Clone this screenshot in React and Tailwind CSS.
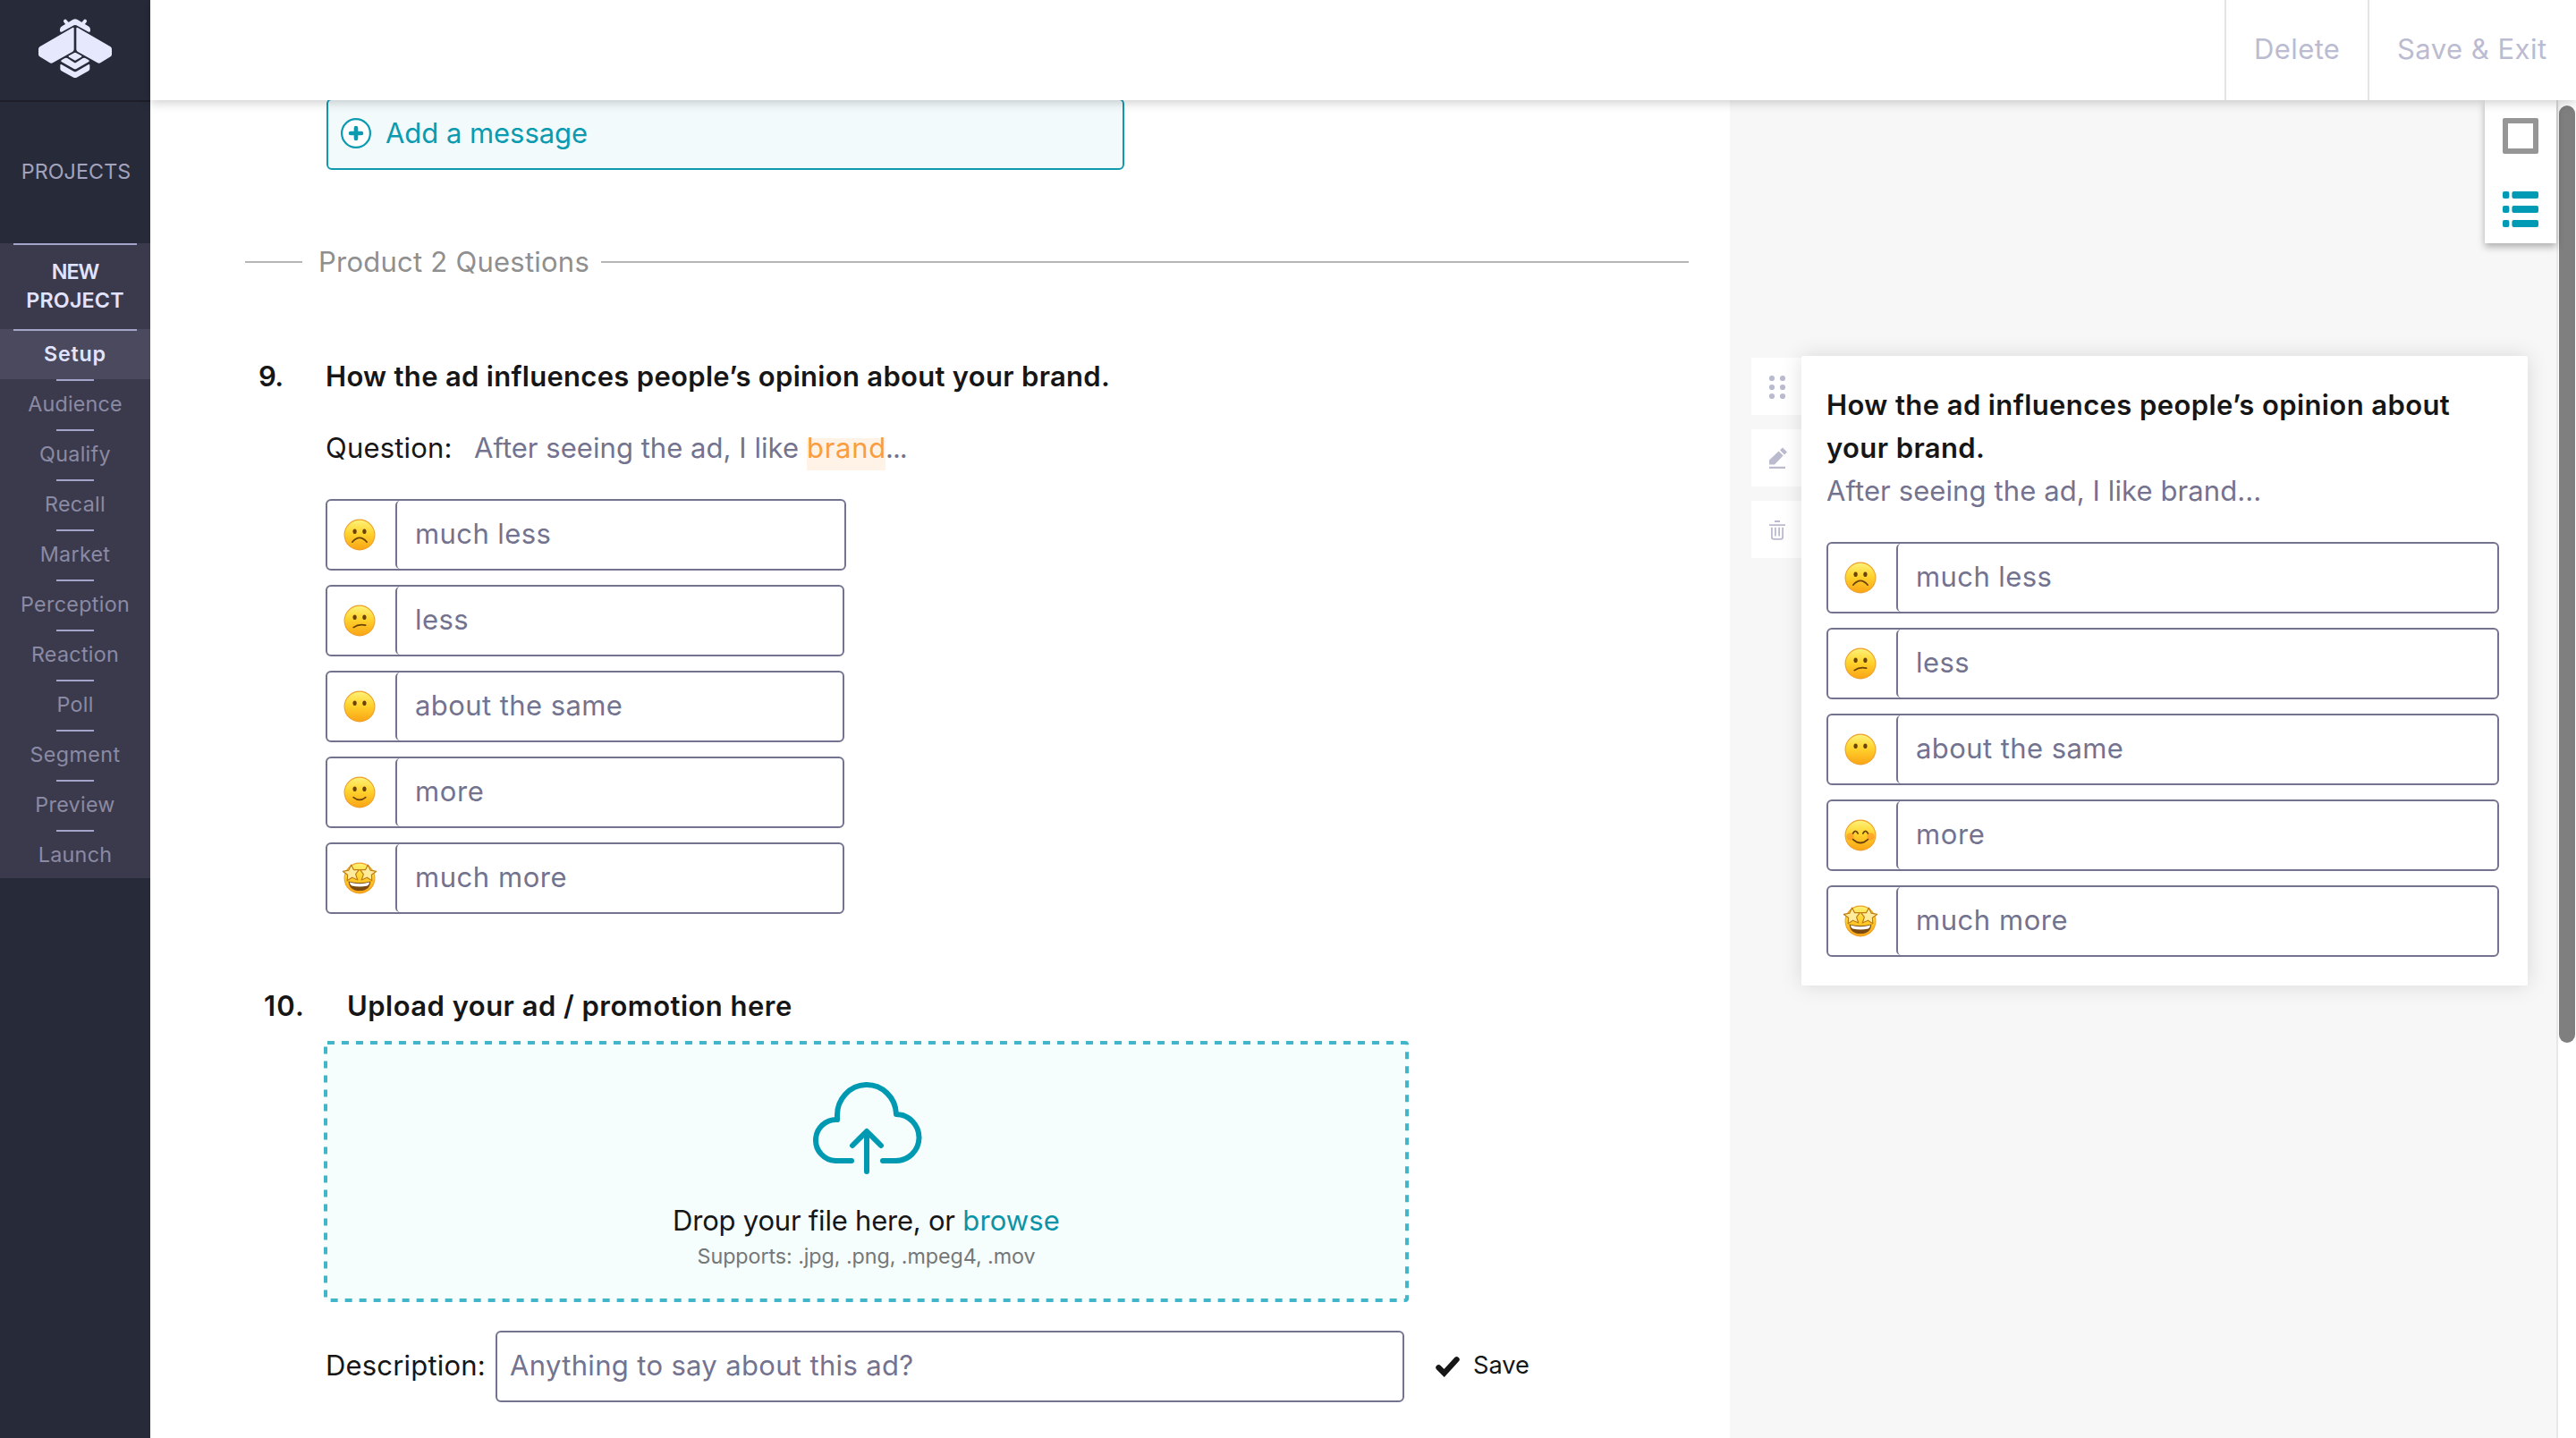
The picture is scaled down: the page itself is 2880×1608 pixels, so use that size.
import React from "react";

function Logo() {
  const wing =
    "M248 95Q248 90 243 93L133 157Q129 160 129 165V182Q129 187 133 190L166 210Q172 214 178 210L244 173Q248 170 248 166Z";
  return (
    <svg className="h-[68px] w-[84px]" viewBox="126 60 252 204" fill="#e6e8fd">
      <path d="M219 71L228 82M285 71L276 82" stroke="#e6e8fd" strokeWidth="12" strokeLinecap="round" />
      <path d="M201 103V98Q202 91 208 88L244 66Q252 62 260 66L296 88Q302 91 303 98V103Q303 109 297 107L256 85Q252 83 248 85L207 107Q201 109 201 103Z" />
      <path d={wing} />
      <path d={wing} transform="translate(504 0) scale(-1 1)" />
      <path d="M248 178Q252 175 256 178L273 187Q276 189 273 191L256 201Q252 204 248 201L231 191Q228 189 231 187Z" />
      <path d="M206 202L218 195Q222 193 226 195L248 209Q252 212 256 209L278 195Q282 193 286 195L298 202Q301 205 298 207L256 231Q252 233 248 231L206 207Q203 205 206 202Z" />
      <path d="M202 219Q202 214 207 217L248 240Q252 242 256 240L296 217Q301 214 301 219V231Q301 235 297 238L257 260Q252 262 247 260L206 238Q202 235 202 231Z" />
    </svg>
  );
}

function Face({ mood }) {
  const id = React.useId();
  const ink = "#6b4208";
  const line = { fill: "none", stroke: ink, strokeWidth: 1.7, strokeLinecap: "round" };
  return (
    <svg className="h-[38px] w-[40px]" viewBox="0 0 40 38">
      <defs>
        <linearGradient id={id} x1="0" y1="0" x2="0" y2="1">
          <stop offset="0" stopColor="#fff27a" />
          <stop offset="0.45" stopColor="#ffd42e" />
          <stop offset="1" stopColor="#fba414" />
        </linearGradient>
      </defs>
      <circle cx="20" cy="19" r="16.9" fill={`url(#${id})`} stroke="#efa02a" strokeWidth="1.1" />
      {mood !== "blush" && mood !== "starry" && (
        <g fill={ink}>
          <ellipse cx="14.6" cy="15.2" rx="2.1" ry="2.8" />
          <ellipse cx="25.4" cy="15.2" rx="2.1" ry="2.8" />
        </g>
      )}
      {mood === "frown" && <path d="M11.8 27.2Q20 17.6 28.2 27.2" {...line} />}
      {mood === "confused" && <path d="M13.2 26.6Q19 22.4 26.6 24.2" {...line} />}
      {mood === "smile" && <path d="M13.2 24.6Q20 30.2 26.8 24.6" {...line} />}
      {mood === "blush" && (
        <g>
          <circle cx="8.6" cy="20.5" r="4.2" fill="#ff7a2a" opacity="0.45" />
          <circle cx="31.4" cy="20.5" r="4.2" fill="#ff7a2a" opacity="0.45" />
          <path d="M11.6 17Q14.4 11.6 17.2 17M22.8 17Q25.6 11.6 28.4 17M11.6 23.6Q20 31.4 28.4 23.6" {...line} />
        </g>
      )}
      {mood === "starry" && (
        <g>
          <path d="M7.6 22.4Q20 26 32.4 22.4Q31.4 33 20 33Q8.6 33 7.6 22.4Z" fill="#7a4a10" />
          <path d="M8.8 23.6Q20 26.8 31.2 23.6Q30.6 27 28.8 27.6Q20 29.4 11.2 27.6Q9.4 27 8.8 23.6Z" fill="#fff" />
          <path
            d="M10.6 4L13.4 9.6L19.4 9.6L15.6 14.6L17.8 21L11.6 18.2L6.2 21.8L6.6 15.2L1.4 11.4L7.8 10.2Z"
            fill="#ffeb9c" stroke="#c07c10" strokeWidth="1.2" strokeLinejoin="round"
          />
          <path
            d="M29.4 4L26.6 9.6L20.6 9.6L24.4 14.6L22.2 21L28.4 18.2L33.8 21.8L33.4 15.2L38.6 11.4L32.2 10.2Z"
            fill="#ffeb9c" stroke="#c07c10" strokeWidth="1.2" strokeLinejoin="round"
          />
        </g>
      )}
    </svg>
  );
}

function Option({ mood, label, className }) {
  return (
    <div className={`flex h-20 rounded-[6px] border-2 border-[#73738f] bg-white ${className}`}>
      <div className="flex w-[76px] items-center justify-center pr-1 pb-px">
        <Face mood={mood} />
      </div>
      <div className="flex flex-1 items-center rounded-l-[5px] border-l-2 border-[#73738f] pb-[2px] pl-[20px] text-[#73738f]">
        {label}
      </div>
    </div>
  );
}

const steps = [
  ["Audience", "tracking-[0.16px]"],
  ["Qualify", "tracking-[0.3px]"],
  ["Recall", "tracking-[0.3px]"],
  ["Market", "tracking-[0.3px]"],
  ["Perception", "tracking-[0.32px]"],
  ["Reaction", "tracking-[0.3px]"],
  ["Poll", "tracking-[0.3px]"],
  ["Segment", "tracking-[0.4px]"],
  ["Preview", "tracking-[0.3px]"],
  ["Launch", "tracking-[0.3px]"],
];

function Sidebar() {
  return (
    <aside className="flex w-[168px] shrink-0 flex-col bg-[#272a39] text-center text-[23.3px]">
      <div className="flex h-[114px] flex-col items-center border-b-2 border-[#1d1e29] pt-5">
        <Logo />
      </div>
      <div className="h-[158px] pt-[62px] pl-[2px] leading-[32px] tracking-[0.07px] text-[#a2a3bb]">PROJECTS</div>
      <div className="h-[710px] bg-[#3b3a4c]">
        <div className="flex h-24 flex-col items-center">
          <div className="h-[2px] w-[138px] bg-[#a5a5ca]" />
          <div className="pt-[14px] leading-[32px] font-semibold text-[#e2e4ff]">
            <div className="tracking-[-1px]">NEW</div>
            <div className="tracking-[0.18px]">PROJECT</div>
          </div>
        </div>
        <div className="flex h-14 flex-col items-center bg-[#4a495d]">
          <div className="h-[2px] w-[138px] bg-[#a5a5ca]" />
          <div className="leading-[51px] font-semibold tracking-[0.77px] text-[#e2e4ff]">Setup</div>
        </div>
        {steps.map(([name, track]) => (
          <div key={name} className="flex h-14 flex-col items-center text-[#8a8aa4]">
            <div className="h-[2px] w-[42px] bg-[#a5a5ca]" />
            <div className={`leading-[51px] ${track}`}>{name}</div>
          </div>
        ))}
      </div>
    </aside>
  );
}

function Header() {
  return (
    <header className="relative z-10 flex h-28 shrink-0 justify-end bg-white leading-[109px] text-[#bbbbd1] shadow-[0_2px_12px_rgba(0,0,0,0.22)]">
      <div className="w-[160px] border-l-2 border-[#e3e3e6] pl-[31px] tracking-[0.4px]">Delete</div>
      <div className="w-[233px] border-l-2 border-[#e3e3e6] pl-[31px] tracking-[0.48px]">Save &amp; Exit</div>
    </header>
  );
}

function Survey() {
  return (
    <main className="w-[1766px] shrink-0 bg-white leading-[40px] text-[#161616]">
      <div className="-mt-[2px] ml-[197px] flex h-20 w-[892px] items-center gap-[15px] rounded-[6px] border-2 border-[#1199ae] bg-[#f2fafb] pb-[2px] pl-[13px] text-[#0b9ab0]">
        <svg className="h-9 w-9" viewBox="0 0 36 36">
          <circle cx="18" cy="18" r="15.9" fill="#fff" stroke="#0b9ab0" strokeWidth="2.2" />
          <path d="M18 12V24M12 18H24" stroke="#0b9ab0" strokeWidth="4.6" strokeLinecap="round" />
        </svg>
        <span className="tracking-[-0.04px]">Add a message</span>
      </div>

      <div className="mt-[83px] mr-[46px] ml-[106px] flex items-center text-[#8f8f8f]">
        <div className="h-[2px] w-16 bg-[#b6b6b6]" />
        <div className="w-[334px] pl-[18px] whitespace-nowrap tracking-[0.24px]">Product 2 Questions</div>
        <div className="h-[2px] flex-1 bg-[#b6b6b6]" />
      </div>

      <div className="mt-[88px] ml-[121px] flex font-semibold">
        <div className="w-[75px] tracking-[-0.6px]">9.</div>
        <div className="whitespace-nowrap tracking-[0.3px]">How the ad influences people’s opinion about your brand.</div>
      </div>

      <div className="mt-[40px] ml-[196px] flex h-[40px] whitespace-nowrap text-[#73738f]">
        <div className="w-[166px] tracking-[0.2px] text-[#161616]">Question:</div>
        <div className="w-[372px] tracking-[0.04px]">After seeing the ad, I like</div>
        <div className="mt-[9px] h-9 w-[88px] bg-[#fff3e8] leading-[22px] tracking-[0.7px] text-[#f99d40]">brand</div>
        <div className="tracking-[-1px]">...</div>
      </div>

      <div className="mt-[37px] ml-[196px] flex flex-col gap-4">
        <Option mood="frown" className="w-[582px]" label={<span className="tracking-[0.4px]">much less</span>} />
        <Option mood="confused" className="w-[580px]" label={<span className="tracking-[0.45px]">less</span>} />
        <Option mood="neutral" className="w-[580px]" label={<span className="tracking-[0.42px]">about the same</span>} />
        <Option mood="smile" className="w-[580px]" label={<span className="tracking-[0.6px]">more</span>} />
        <Option mood="starry" className="w-[580px]" label={<span className="tracking-[0.55px]">much more</span>} />
      </div>

      <div className="mt-[82px] ml-[127px] flex pt-px font-semibold">
        <div className="w-[93px] tracking-[1.2px]">10.</div>
        <div className="whitespace-nowrap tracking-[0.47px]">Upload your ad / promotion here</div>
      </div>

      <div className="relative mt-[19px] ml-[194px] flex h-[292px] w-[1213px] flex-col items-center rounded-[4px] bg-[#f5fdfd] pt-11">
        <svg className="absolute inset-0 h-[292px] w-[1213px]" viewBox="0 0 1213 292" fill="none">
          <rect x="2" y="2" width="1209" height="288" rx="2" stroke="#43b5c8" strokeWidth="4" strokeDasharray="8 8" />
        </svg>
        <svg
          className="h-[108px] w-[128px] shrink-0"
          viewBox="906 1208 128 108"
          fill="none"
          stroke="#0099b2"
          strokeWidth="6"
          strokeLinecap="round"
          strokeLinejoin="round"
        >
          <path d="M953 1298H935A23 23 0 0 1 937 1252V1248A33 34 0 0 1 1003 1246A26 26 0 0 1 1002 1298H988" />
          <path d="M970 1310V1266M954 1281L970 1265L986 1281" />
        </svg>
        <div className="mt-[29px] whitespace-nowrap tracking-[-0.22px]">
          Drop your file here, or <span className="tracking-[0.1px] text-[#0b93a8]">browse</span>
        </div>
        <div className="mt-[4px] text-[23.3px] leading-[32px] tracking-[-0.07px] text-[#747878]">
          Supports: .jpg, .png, .mpeg4, .mov
        </div>
      </div>

      <div className="mt-8 ml-[196px] flex h-20 items-center">
        <div className="w-[190px] pb-[2px] tracking-[0.18px]">Description:</div>
        <div className="flex h-20 w-[1016px] items-center rounded-[6px] border-2 border-[#73738f] pb-[2px] pl-[14px] tracking-[0.34px] text-[#73738f]">
          Anything to say about this ad?
        </div>
        <svg className="ml-[34px] h-[24px] w-[30px]" viewBox="0 0 30 24">
          <path d="M4.4 13.2L10.6 19.4L24.6 4.2" fill="none" stroke="#161616" strokeWidth="6.2" strokeLinecap="round" />
        </svg>
        <div className="ml-[13px] pb-[2px] text-[27.2px]">Save</div>
      </div>
    </main>
  );
}

function SideButton({ children }) {
  return (
    <div className="h-16 w-14 bg-white pt-5 pl-[18px]">
      <svg className="h-7 w-6" viewBox="0 0 24 28" fill="#bbbbd0">
        {children}
      </svg>
    </div>
  );
}

function Preview() {
  return (
    <section className="relative flex flex-1 items-start bg-[#f7f7f7] pt-[286px] pl-6">
      <div className="mt-[2px] flex flex-col gap-4">
        <SideButton>
          {[3, 13, 23].map((y) => (
            <React.Fragment key={y}>
              <circle cx="5" cy={y} r="3.1" />
              <circle cx="17" cy={y} r="3.1" />
            </React.Fragment>
          ))}
        </SideButton>
        <SideButton>
          <path d="M2 19.6V14.4L12.6 4.6L17.6 9.6L8 19.6ZM14 3.2L17 .4L22 5.4L19 8.4ZM2 21.8H20V24H2Z" />
        </SideButton>
        <SideButton>
          <path d="M8 2.1H14V4H8ZM2 6.2H20V8H2Z" />
          <path d="M4.9 9.8V20.6Q4.9 22.9 7.2 22.9H14.8Q17.1 22.9 17.1 20.6V9.8M8.9 9.8V19.6M13.1 9.8V19.6" fill="none" stroke="#bbbbd0" strokeWidth="1.8" />
        </SideButton>
      </div>
      <div className="relative h-[704px] w-[812px] rounded-[2px] bg-white pt-[31px] pl-[28px] leading-[48px] shadow-[0_0_24px_rgba(0,0,0,0.13)]">
        <div className="font-semibold tracking-[0.4px] whitespace-nowrap text-[#161616]">
          How the ad influences people’s opinion about
          <br />
          your brand.
        </div>
        <div className="tracking-[0.1px] text-[#73738f]">After seeing the ad, I like brand...</div>
        <div className="mt-[33px] flex flex-col gap-4">
          <Option mood="frown" className="w-[752px]" label={<span className="tracking-[0.4px]">much less</span>} />
          <Option mood="confused" className="w-[752px]" label={<span className="tracking-[0.45px]">less</span>} />
          <Option mood="neutral" className="w-[752px]" label={<span className="tracking-[0.42px]">about the same</span>} />
          <Option mood="blush" className="w-[752px]" label={<span className="tracking-[0.6px]">more</span>} />
          <Option mood="starry" className="w-[752px]" label={<span className="tracking-[0.55px]">much more</span>} />
        </div>
      </div>
      <div className="absolute top-0 right-0 flex h-40 w-20 flex-col bg-white pt-5 pl-5 shadow-[0_4px_8px_rgba(0,0,0,0.3)]">
        <div className="h-10 w-10 rounded-[2px] border-[6px] border-[#969696]" />
        <svg className="mt-[42px] h-10 w-10" viewBox="0 0 40 40" fill="#009ab4">
          {[0, 16, 32].map((y) => (
            <React.Fragment key={y}>
              <rect x="0" y={y} width="7.4" height="8" rx="2" />
              <rect x="10.4" y={y} width="29.6" height="8" rx="2" />
            </React.Fragment>
          ))}
        </svg>
      </div>
    </section>
  );
}

export default function App() {
  return (
    <div className="flex h-[1608px] w-[2880px] overflow-hidden bg-white font-['Inter',sans-serif] text-[31px]">
      <Sidebar />
      <div className="flex flex-1 flex-col">
        <Header />
        <div className="flex min-h-0 flex-1">
          <Survey />
          <Preview />
          <div className="w-[22px] shrink-0 border-l-2 border-[#e8e8e8] bg-white pt-[6px] pl-px">
            <div className="h-[1048px] w-[18px] rounded-full bg-[#7f7f7f]" />
          </div>
        </div>
      </div>
    </div>
  );
}
